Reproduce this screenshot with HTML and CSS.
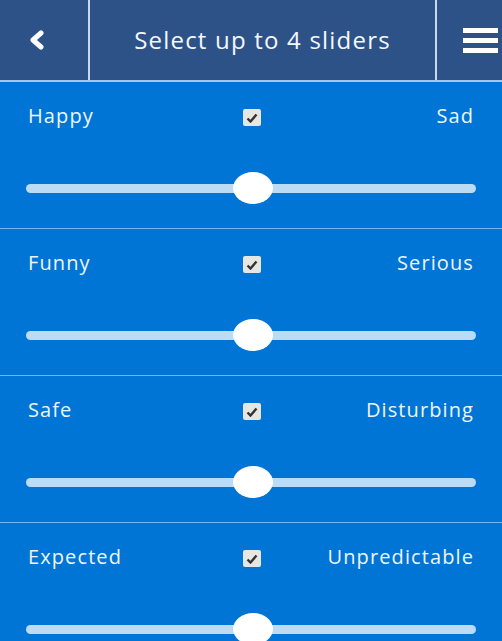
FILE: index.html
```html
<!DOCTYPE html>
<html>
<head>
<meta charset="utf-8">
<link rel="stylesheet" href="styles.css">
</head>
<body>
<header class="topbar">
  <div class="back">
    <svg width="18" height="20" viewBox="0 0 18 20"><path d="M13 3 L5 10 L13 17" fill="none" stroke="#fff" stroke-width="5" stroke-linecap="round" stroke-linejoin="round"/></svg>
  </div>
  <div class="title">Select up to 4 sliders</div>
  <div class="menu">
    <span class="bar"></span><span class="bar"></span><span class="bar"></span>
  </div>
</header>
<main class="list">
  <section class="item">
    <div class="row"><span class="lbl">Happy</span><span class="chk"><svg width="12" height="10" viewBox="0 0 12 10"><path d="M1.5 5.5 L4.5 8.5 L10.5 1.5" fill="none" stroke="#333" stroke-width="2.4"/></svg></span><span class="lbl right">Sad</span></div>
    <div class="slider"><div class="track"></div><div class="thumb"></div></div>
  </section>
  <section class="item">
    <div class="row"><span class="lbl">Funny</span><span class="chk"><svg width="12" height="10" viewBox="0 0 12 10"><path d="M1.5 5.5 L4.5 8.5 L10.5 1.5" fill="none" stroke="#333" stroke-width="2.4"/></svg></span><span class="lbl right">Serious</span></div>
    <div class="slider"><div class="track"></div><div class="thumb"></div></div>
  </section>
  <section class="item">
    <div class="row"><span class="lbl">Safe</span><span class="chk"><svg width="12" height="10" viewBox="0 0 12 10"><path d="M1.5 5.5 L4.5 8.5 L10.5 1.5" fill="none" stroke="#333" stroke-width="2.4"/></svg></span><span class="lbl right">Disturbing</span></div>
    <div class="slider"><div class="track"></div><div class="thumb"></div></div>
  </section>
  <section class="item">
    <div class="row"><span class="lbl">Expected</span><span class="chk"><svg width="12" height="10" viewBox="0 0 12 10"><path d="M1.5 5.5 L4.5 8.5 L10.5 1.5" fill="none" stroke="#333" stroke-width="2.4"/></svg></span><span class="lbl right">Unpredictable</span></div>
    <div class="slider"><div class="track"></div><div class="thumb"></div></div>
  </section>
</main>
</body>
</html>
```
FILE: styles.css
```css
html, body { margin: 0; padding: 0; }
body {
  width: 502px;
  height: 641px;
  overflow: hidden;
  background: #0075d5;
  font-family: "Open Sans", "DejaVu Sans", sans-serif;
  color: #eef5fc;
}
.topbar {
  display: flex;
  height: 80px;
  background: #2d5288;
  border-bottom: 2px solid #a8c6e8;
}
.back {
  width: 90px;
  display: flex;
  align-items: center;
  justify-content: center;
  padding-right: 14px;
  box-sizing: border-box;
  border-right: 2px solid #c9d8ec;
}
.title {
  flex: 1;
  display: flex;
  align-items: center;
  justify-content: center;
  font-size: 24px;
  letter-spacing: 1.2px;
  color: #f4f7fb;
  border-right: 2px solid #c9d8ec;
  padding-bottom: 1px;
}
.menu {
  width: 65px;
  display: flex;
  flex-direction: column;
  justify-content: center;
  align-items: flex-end;
  gap: 5px;
  padding-right: 4px;
  box-sizing: border-box;
}
.bar {
  display: block;
  width: 35px;
  height: 5px;
  background: #fff;
}
.list { display: flex; flex-direction: column; }
.item {
  height: 147px;
  border-bottom: 1px solid #7ab4e6;
  padding: 21px 28px 0 28px;
  box-sizing: border-box;
}
.row {
  display: flex;
  align-items: center;
  justify-content: space-between;
  height: 24px;
}
.lbl {
  font-size: 20px;
  letter-spacing: 1.1px;
  width: 160px;
}
.lbl.right { text-align: right; }
.chk {
  width: 18px;
  height: 17px;
  background: #e6e6e3;
  border-radius: 2px;
  display: flex;
  align-items: center;
  justify-content: center;
  margin-top: 5px;
  margin-left: 2px;
}
.slider {
  position: relative;
  height: 32px;
  margin: 45px -2px 0 -2px;
  display: flex;
  align-items: center;
}
.track {
  flex: 1;
  height: 9px;
  border-radius: 5px;
  background: #bcdcf6;
}
.thumb {
  position: absolute;
  left: 207px;
  top: 0;
  width: 40px;
  height: 32px;
  border-radius: 50%;
  background: #fff;
}
```
